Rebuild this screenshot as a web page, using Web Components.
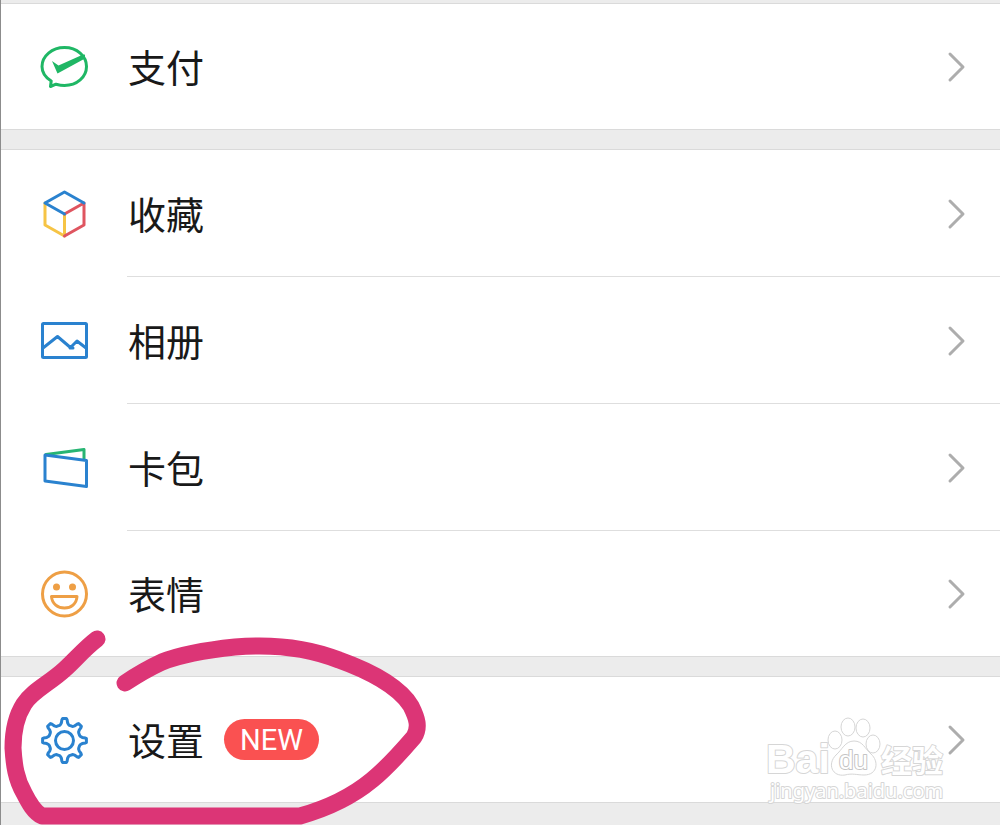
<!DOCTYPE html>
<html lang="zh-CN">
<head>
<meta charset="utf-8">
<meta name="viewport" content="width=device-width, initial-scale=1">
<title>我</title>
<style>
  html { background: #ececec; }
  body { margin: 0; font-family: Roboto, "Noto Sans CJK SC", sans-serif; color: #191919; }
</style>
</head>
<body>
<me-page>
  <menu-group>
    <menu-row icon="pay">支付</menu-row>
  </menu-group>
  <menu-group>
    <menu-row icon="favorites">收藏</menu-row>
    <menu-row icon="album">相册</menu-row>
    <menu-row icon="cards">卡包</menu-row>
    <menu-row icon="sticker">表情</menu-row>
  </menu-group>
  <menu-group>
    <menu-row icon="settings">设置<new-badge slot="badge">NEW</new-badge></menu-row>
    <site-watermark slot="overlay"></site-watermark>
    <hand-circle slot="overlay"></hand-circle>
  </menu-group>
</me-page>

<script>
  const gearPath = () => {
    const points = [];
    for (let i = 0; i < 8; i++) {
      const a = i * 45;
      for (const [d, r] of [[-18, 16], [-14, 16.5], [-10, 18], [-7, 21], [-5, 22], [5, 22], [7, 21], [10, 18], [14, 16.5], [18, 16]]) {
        const t = (a + d) * Math.PI / 180;
        points.push((24.5 + r * Math.sin(t)).toFixed(1) + ' ' + (24.5 - r * Math.cos(t)).toFixed(1));
      }
    }
    return 'M' + points.join('L') + 'Z';
  };

  const ICONS = {
    pay: `<g stroke="#1fb765"><path d="M10.5 43.500 11.2 38C5.500 34.500 2 29.500 2 23.500 2 13 12 4.500 24.500 4.500S46.500 13 46.500 23.500 37 42.500 24.500 42.500C21.500 42.500 18.500 41.900 16 41.200Z"/><path d="M12 18 18.500 22.500 42 12 45 11.500 45 15.500 17.500 30.500Z" fill="#1fb765" stroke="none"/></g>`,
    favorites: `<path d="M5 13V35L24.500 46V24" stroke="#f6c445"/><path d="M24.500 46 44 35V13L24.500 24" stroke="#df5560"/><path d="M24.500 24 5 13 24.500 2 44 13" stroke="#2a82cf"/>`,
    album: `<g stroke="#2a82cf"><rect x="2.500" y="6.500" width="44" height="34" rx="1"/><path d="M3 31 17.500 19.500 31 31 33 31M30 31 37 24 46 31"/></g>`,
    cards: `<path d="M6 10.500 44 5.500V15" stroke="#27b573"/><path d="M5 11 46.500 16.500V42.500L5 37Z" stroke="#2a82cf"/>`,
    sticker: `<g stroke="#ee9f45"><circle cx="24.500" cy="24" r="22"/><path d="M11.500 26.500H37C36.500 34 31 38 24.500 38S12 34 11.500 26.500Z"/><g fill="#ee9f45" stroke="none"><circle cx="16.500" cy="17" r="3.500"/><circle cx="32.500" cy="17" r="3.500"/></g></g>`,
    settings: `<g stroke="#2a82cf"><path d="${gearPath()}"/><circle cx="24.500" cy="24.500" r="9"/></g>`
  };

  const define = (name, html, setup) => {
    const template = document.createElement('template');
    template.innerHTML = html;
    customElements.define(name, class extends HTMLElement {
      connectedCallback() {
        if (this.shadowRoot) return;
        this.attachShadow({ mode: 'open' }).append(template.content.cloneNode(true));
        if (setup) setup(this, this.shadowRoot);
      }
    });
  };

  define('me-page', `
    <style>
      :host { display: block; box-sizing: border-box; min-height: 100vh; padding: 3px 0 22px; border-left: 1px solid #8c8c8c; }
      main { display: flex; flex-direction: column; gap: 19px; }
    </style>
    <main><slot></slot></main>`);

  define('menu-group', `
    <style>
      :host { display: block; position: relative; background: #fff; border-block: 1px solid #dadada; }
      nav { display: flex; flex-direction: column; }
      ::slotted(menu-row:not(:last-of-type)) { --divider: 1px solid #dedede; --row-height: 127px; }
    </style>
    <nav><slot></slot></nav><slot name="overlay"></slot>`);

  define('menu-row', `
    <style>
      :host { display: block; }
      a { display: flex; align-items: stretch; min-height: var(--row-height, 125px); padding-left: 39px; color: inherit; text-decoration: none; }
      svg { flex: none; align-self: center; overflow: visible; fill: none; stroke-width: 3; stroke-linejoin: round; stroke-linecap: round; }
      .body { flex: 1; display: flex; align-items: center; gap: 20px; margin-left: 40px; padding-right: 34px; position: relative; }
      .rule { position: absolute; left: -1px; right: 0; bottom: 0; border-bottom: var(--divider, 0); }
      .label { font-size: 38px; line-height: 56px; padding-top: 5px; }
      .arrow { margin-left: auto; stroke: #adadad; }
    </style>
    <a href="#">
      <svg class="icon" width="48" height="48" viewBox="0 0 48 48" aria-hidden="true"></svg>
      <span class="body">
        <span class="label"><slot></slot></span>
        <slot name="badge"></slot>
        <svg class="arrow" width="18" height="30" viewBox="0 0 18 30" aria-hidden="true"><path d="M2 2 15 15 2 28"/></svg>
        <span class="rule"></span>
      </span>
    </a>`, (host, root) => {
    root.querySelector('.icon').innerHTML = ICONS[host.getAttribute('icon')];
    root.querySelector('a').href = '#' + host.getAttribute('icon');
  });

  define('new-badge', `
    <style>
      :host { display: block; padding: 2px 16px 0; border-radius: 21px; background: #fa5151; color: #fff; font-size: 29px; line-height: 39px; }
    </style>
    <slot></slot>`);

  define('site-watermark', `
    <style>
      :host { display: block; position: absolute; right: 50px; top: 36px; pointer-events: none; }
      svg { display: block; overflow: visible; fill: #fff; stroke: #d6d6d6; stroke-width: 1; }
      text { paint-order: stroke; stroke-width: 2; stroke-linejoin: round; }
      .logo { font: bold 41px "Liberation Sans", sans-serif; }
      .du { font: 26px "Liberation Sans", sans-serif; stroke: #c4c4c4; }
      .cjk { font: bold 31px "Noto Sans CJK SC", sans-serif; }
      .url { font: 20px "Noto Sans", sans-serif; }
    </style>
    <svg width="184" height="92" viewBox="0 0 184 92">
      <text class="logo" x="0" y="60">Bai</text>
      <ellipse cx="69" cy="27" rx="7" ry="9"/>
      <ellipse cx="82" cy="14" rx="7" ry="9"/>
      <ellipse cx="97" cy="15" rx="7" ry="9"/>
      <ellipse cx="107" cy="31" rx="7" ry="9"/>
      <path d="M88 28C97 28 99 36 105 41 113 48 112 62 98 62 91 62 86 60 79 62 66 64 61 51 70 42 76 37 79 28 88 28Z"/>
      <text class="du" x="73" y="56">du</text>
      <text class="cjk" x="115" y="59">经验</text>
      <text class="url" x="4" y="85">jingyan.baidu.com</text>
    </svg>`);

  define('hand-circle', `
    <style>
      :host { display: block; position: absolute; left: 0; top: -47px; pointer-events: none; }
      svg { display: block; fill: none; stroke: #dc3576; stroke-width: 17; stroke-linecap: round; stroke-linejoin: round; }
    </style>
    <svg width="430" height="195" viewBox="1 630 430 195" aria-hidden="true">
      <path d="M97 639C85 648 76 659 65 669 50 683 32 691 24 704 15 718 13 732 13 748 14 765 16 779 24 793 29 803 34 812 42 816H300C325 809 349 799 372 780 388 767 402 751 414 737 420 727 417 718 411 706 399 686 367 670 339 660 306 647 270 644 235 647 206 650 182 654 162 662 149 668 137 675 125 683"/>
    </svg>`);
</script>
</body>
</html>
